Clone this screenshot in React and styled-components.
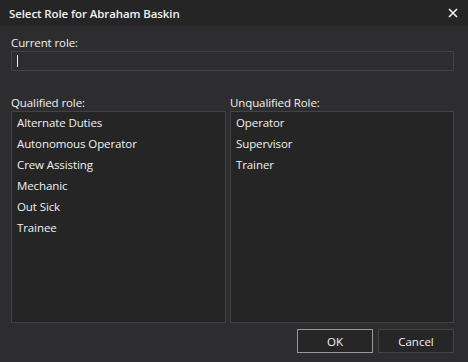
import styled, { createGlobalStyle } from 'styled-components'

const Global = createGlobalStyle`
  html, body {
    margin: 0;
    padding: 0;
    background: #2d2d30;
  }
  * {
    box-sizing: border-box;
  }
`;

const Dialog = styled.div`
  width: 468px;
  height: 362px;
  display: flex;
  flex-direction: column;
  background: #2d2d30;
  color: #f1f1f1;
  font-family: "Open Sans", "Noto Sans", sans-serif;
  font-size: 11.5px;
`;

const TitleBar = styled.div`
  height: 27px;
  display: flex;
  align-items: center;
  justify-content: space-between;
  padding: 0 9px 0 9px;
  background: #252526;
`;

const Title = styled.span`
  font-size: 11.5px;
  font-weight: 600;
  letter-spacing: -0.1px;
`;

const Close = styled.button`
  border: none;
  background: none;
  padding: 0;
  width: 12px;
  height: 12px;
  display: flex;
  align-items: center;
  justify-content: center;
  cursor: pointer;
`;

const Body = styled.div`
  flex: 1;
  display: flex;
  flex-direction: column;
  padding: 8px 14px 9px 11px;
`;

const Label = styled.div`
  height: 17px;
  line-height: 17px;
  letter-spacing: -0.1px;
`;

const Input = styled.div`
  height: 20px;
  border: 1px solid #434346;
  background: #2d2d30;
  display: flex;
  align-items: center;
  padding-left: 5px;
`;

const Caret = styled.span`
  width: 1px;
  height: 12px;
  background: #f1f1f1;
`;

const Columns = styled.div`
  margin-top: 23px;
  display: grid;
  grid-template-columns: 215px 224px;
  column-gap: 4px;
`;

const Column = styled.div`
  display: flex;
  flex-direction: column;
`;

const List = styled.div`
  height: 212px;
  border: 1px solid #434346;
  background: #252526;
  padding: 3px 0 0 5px;
  display: flex;
  flex-direction: column;
`;

const Item = styled.div`
  height: 21px;
  line-height: 15px;
  letter-spacing: -0.1px;
`;

const Buttons = styled.div`
  margin-top: 6px;
  display: flex;
  justify-content: flex-end;
  gap: 5px;
`;

const Button = styled.button`
  width: 76px;
  height: 24px;
  background: #262626;
  color: #f1f1f1;
  font-family: inherit;
  font-size: 11.5px;
  border: 1px solid ${p => (p.$primary ? '#9a9a9a' : '#434346')};
  cursor: pointer;
`;

const qualified = ['Alternate Duties', 'Autonomous Operator', 'Crew Assisting', 'Mechanic', 'Out Sick', 'Trainee'];
const unqualified = ['Operator', 'Supervisor', 'Trainer'];

export default function App() {
  return (
    <>
      <Global />
      <Dialog>
        <TitleBar>
          <Title>Select Role for Abraham Baskin</Title>
          <Close aria-label="Close">
            <svg width="10" height="10" viewBox="0 0 10 10">
              <path d="M1 1 L9 9 M9 1 L1 9" stroke="#f1f1f1" strokeWidth="1.6" />
            </svg>
          </Close>
        </TitleBar>
        <Body>
          <Label>Current role:</Label>
          <Input>
            <Caret />
          </Input>
          <Columns>
            <Column>
              <Label>Qualified role:</Label>
              <List>
                {qualified.map(r => <Item key={r}>{r}</Item>)}
              </List>
            </Column>
            <Column>
              <Label>Unqualified Role:</Label>
              <List>
                {unqualified.map(r => <Item key={r}>{r}</Item>)}
              </List>
            </Column>
          </Columns>
          <Buttons>
            <Button $primary>OK</Button>
            <Button>Cancel</Button>
          </Buttons>
        </Body>
      </Dialog>
    </>
  )
}
